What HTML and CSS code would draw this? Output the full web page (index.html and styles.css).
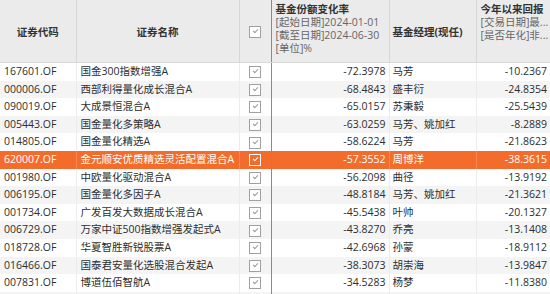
FILE: index.html
```html
<!DOCTYPE html>
<html lang="zh-CN">
<head>
<meta charset="utf-8">
<link rel="stylesheet" href="styles.css">
</head>
<body>
<table class="grid">
  <colgroup>
    <col class="c-code"><col class="c-name"><col class="c-chk"><col class="c-rate"><col class="c-mgr"><col class="c-ret">
  </colgroup>
  <thead>
    <tr class="head">
      <th class="h-center">证券代码</th>
      <th class="h-center">证券名称</th>
      <th class="h-chk"><span class="chk"></span></th>
      <th class="h-multi">
        <div class="h-title">基金份额变化率</div>
        <div class="h-sub">[起始日期]2024-01-01</div>
        <div class="h-sub">[截至日期]2024-06-30</div>
        <div class="h-sub">[单位]%</div>
      </th>
      <th class="h-left">基金经理(现任)</th>
      <th class="h-multi">
        <div class="h-title">今年以来回报</div>
        <div class="h-sub">[交易日期]最...</div>
        <div class="h-sub">[是否年化]非...</div>
        <div class="h-sub">&nbsp;</div>
      </th>
    </tr>
  </thead>
  <tbody>
    <tr><td>167601.OF</td><td>国金300指数增强A</td><td class="cc"><span class="chk"></span></td><td class="num">-72.3978</td><td>马芳</td><td class="num">-10.2367</td></tr>
    <tr><td>000006.OF</td><td>西部利得量化成长混合A</td><td class="cc"><span class="chk"></span></td><td class="num">-68.4843</td><td>盛丰衍</td><td class="num">-24.8354</td></tr>
    <tr><td>090019.OF</td><td>大成景恒混合A</td><td class="cc"><span class="chk"></span></td><td class="num">-65.0157</td><td>苏秉毅</td><td class="num">-25.5439</td></tr>
    <tr><td>005443.OF</td><td>国金量化多策略A</td><td class="cc"><span class="chk"></span></td><td class="num">-63.0259</td><td>马芳、姚加红</td><td class="num">-8.2889</td></tr>
    <tr><td>014805.OF</td><td>国金量化精选A</td><td class="cc"><span class="chk"></span></td><td class="num">-58.6224</td><td>马芳</td><td class="num">-21.8623</td></tr>
    <tr class="sel"><td>620007.OF</td><td>金元顺安优质精选灵活配置混合A</td><td class="cc"><span class="chk"></span></td><td class="num">-57.3552</td><td>周博洋</td><td class="num">-38.3615</td></tr>
    <tr><td>001980.OF</td><td>中欧量化驱动混合A</td><td class="cc"><span class="chk"></span></td><td class="num">-56.2098</td><td>曲径</td><td class="num">-13.9192</td></tr>
    <tr><td>006195.OF</td><td>国金量化多因子A</td><td class="cc"><span class="chk"></span></td><td class="num">-48.8184</td><td>马芳、姚加红</td><td class="num">-21.3621</td></tr>
    <tr><td>001734.OF</td><td>广发百发大数据成长混合A</td><td class="cc"><span class="chk"></span></td><td class="num">-45.5438</td><td>叶帅</td><td class="num">-20.1327</td></tr>
    <tr><td>006729.OF</td><td>万家中证500指数增强发起式A</td><td class="cc"><span class="chk"></span></td><td class="num">-43.8270</td><td>乔亮</td><td class="num">-13.1408</td></tr>
    <tr><td>018728.OF</td><td>华夏智胜新锐股票A</td><td class="cc"><span class="chk"></span></td><td class="num">-42.6968</td><td>孙蒙</td><td class="num">-18.9112</td></tr>
    <tr><td>016466.OF</td><td>国泰君安量化选股混合发起A</td><td class="cc"><span class="chk"></span></td><td class="num">-38.3073</td><td>胡崇海</td><td class="num">-13.9847</td></tr>
    <tr><td>007831.OF</td><td>博道伍佰智航A</td><td class="cc"><span class="chk"></span></td><td class="num">-34.5283</td><td>杨梦</td><td class="num">-11.8380</td></tr>
    <tr class="tail"><td></td><td></td><td class="cc"></td><td></td><td></td><td></td></tr>
  </tbody>
</table>
</body>
</html>
```

FILE: styles.css
```css
html, body {
  margin: 0;
  padding: 0;
  background: #ffffff;
  overflow: hidden;
}
body {
  width: 550px;
  height: 294px;
  font-family: "Open Sans", "Noto Sans CJK SC", sans-serif;
  font-size: 10.5px;
  color: #2e2e2e;
}
.grid {
  border-collapse: collapse;
  table-layout: fixed;
  width: 550px;
}
.c-code { width: 76px; }
.c-name { width: 163px; }
.c-chk { width: 32px; }
.c-rate { width: 118px; }
.c-mgr { width: 87px; }
.c-ret { width: 74px; }

.head th {
  height: 62px;
  padding: 0;
  background: #ebebeb;
  border-right: 1px solid #d6d6d6;
  border-bottom: 1px solid #d9d9d9;
  font-weight: bold;
  color: #333;
  vertical-align: middle;
  white-space: nowrap;
  overflow: hidden;
}
.head th:last-child { border-right: none; }
.h-center { text-align: center; }
.head th.h-left { text-align: left; padding-left: 3px; }
.h-chk { text-align: center; }
.head th.h-chk { border-right: 1px solid #8a8a8a; }
.head th.h-multi {
  text-align: left;
  padding-left: 4px;
  vertical-align: top;
}
.h-title {
  line-height: 13px;
  margin-top: 3px;
  font-weight: bold;
  color: #333;
}
.h-sub {
  line-height: 13px;
  font-weight: normal;
  color: #666;
}

tbody td {
  height: 17.6px;
  padding: 0 4px;
  line-height: 17.6px;
  white-space: nowrap;
  overflow: hidden;
  border-right: 1px solid #ececec;
  box-sizing: border-box;
}
tbody td:last-child { border-right: none; }
tbody td.cc {
  border-right: 1px solid #8a8a8a;
  text-align: center;
  padding: 0;
}
tbody td.num { text-align: right; padding-right: 3px; }
tbody td:nth-child(5) { padding-left: 3px; }
tbody tr:nth-child(even) { background: #f4f4f4; }
tbody tr.tail td { height: 2px; line-height: 0; }
tbody tr.sel { background: #f36c2b; color: #ffffff; }
tbody tr.sel td { border-right-color: #f58a55; }
tbody tr.sel td.cc { border-right-color: #8a8a8a; }

.chk {
  display: inline-block;
  width: 10px;
  height: 10px;
  border: 1px solid #a0a0a0;
  background: #ffffff;
  vertical-align: middle;
  position: relative;
}
.chk::after {
  content: "";
  position: absolute;
  left: 3px;
  top: 2px;
  width: 4px;
  height: 2px;
  border-left: 1px solid #9a9a9a;
  border-bottom: 1px solid #9a9a9a;
  transform: rotate(-45deg);
}
tbody tr.sel .chk { background: #f36c2b; border-color: #ffffff; }
tbody tr.sel .chk::after { border-color: #ffffff; }
```
